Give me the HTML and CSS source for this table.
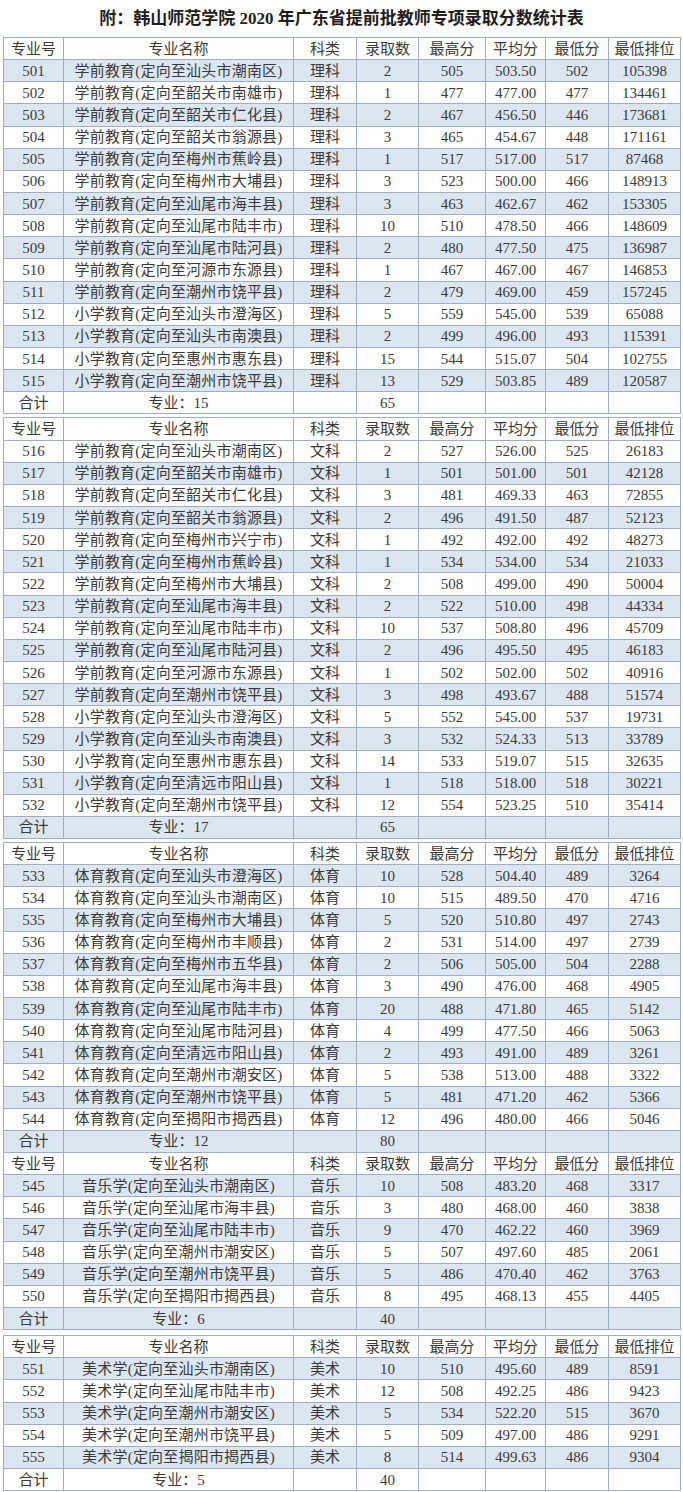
FILE: index.html
```html
<!DOCTYPE html>
<html lang="zh-CN">
<head>
<meta charset="utf-8">
<title>韩山师范学院2020年广东省提前批教师专项录取分数统计表</title>
<link rel="stylesheet" href="styles.css">
</head>
<body>
<h1 class="title">附：韩山师范学院 <span class="num">2020</span> 年广东省提前批教师专项录取分数统计表</h1>

<table class="score">
<colgroup><col class="c1"><col class="c2"><col class="c3"><col class="c4"><col class="c5"><col class="c6"><col class="c7"><col class="c8"></colgroup>
<tr class="head"><td>专业号</td><td>专业名称</td><td>科类</td><td>录取数</td><td>最高分</td><td>平均分</td><td>最低分</td><td>最低排位</td></tr>
<tr class="alt"><td>501</td><td class="name">学前教育(定向至汕头市潮南区)</td><td>理科</td><td>2</td><td>505</td><td>503.50</td><td>502</td><td>105398</td></tr>
<tr><td>502</td><td class="name">学前教育(定向至韶关市南雄市)</td><td>理科</td><td>1</td><td>477</td><td>477.00</td><td>477</td><td>134461</td></tr>
<tr class="alt"><td>503</td><td class="name">学前教育(定向至韶关市仁化县)</td><td>理科</td><td>2</td><td>467</td><td>456.50</td><td>446</td><td>173681</td></tr>
<tr><td>504</td><td class="name">学前教育(定向至韶关市翁源县)</td><td>理科</td><td>3</td><td>465</td><td>454.67</td><td>448</td><td>171161</td></tr>
<tr class="alt"><td>505</td><td class="name">学前教育(定向至梅州市蕉岭县)</td><td>理科</td><td>1</td><td>517</td><td>517.00</td><td>517</td><td>87468</td></tr>
<tr><td>506</td><td class="name">学前教育(定向至梅州市大埔县)</td><td>理科</td><td>3</td><td>523</td><td>500.00</td><td>466</td><td>148913</td></tr>
<tr class="alt"><td>507</td><td class="name">学前教育(定向至汕尾市海丰县)</td><td>理科</td><td>3</td><td>463</td><td>462.67</td><td>462</td><td>153305</td></tr>
<tr><td>508</td><td class="name">学前教育(定向至汕尾市陆丰市)</td><td>理科</td><td>10</td><td>510</td><td>478.50</td><td>466</td><td>148609</td></tr>
<tr class="alt"><td>509</td><td class="name">学前教育(定向至汕尾市陆河县)</td><td>理科</td><td>2</td><td>480</td><td>477.50</td><td>475</td><td>136987</td></tr>
<tr><td>510</td><td class="name">学前教育(定向至河源市东源县)</td><td>理科</td><td>1</td><td>467</td><td>467.00</td><td>467</td><td>146853</td></tr>
<tr class="alt"><td>511</td><td class="name">学前教育(定向至潮州市饶平县)</td><td>理科</td><td>2</td><td>479</td><td>469.00</td><td>459</td><td>157245</td></tr>
<tr><td>512</td><td class="name">小学教育(定向至汕头市澄海区)</td><td>理科</td><td>5</td><td>559</td><td>545.00</td><td>539</td><td>65088</td></tr>
<tr class="alt"><td>513</td><td class="name">小学教育(定向至汕头市南澳县)</td><td>理科</td><td>2</td><td>499</td><td>496.00</td><td>493</td><td>115391</td></tr>
<tr><td>514</td><td class="name">小学教育(定向至惠州市惠东县)</td><td>理科</td><td>15</td><td>544</td><td>515.07</td><td>504</td><td>102755</td></tr>
<tr class="alt"><td>515</td><td class="name">小学教育(定向至潮州市饶平县)</td><td>理科</td><td>13</td><td>529</td><td>503.85</td><td>489</td><td>120587</td></tr>
<tr class="total"><td>合计</td><td>专业：15</td><td></td><td>65</td><td></td><td></td><td></td><td></td></tr>
</table>

<table class="score gap3">
<colgroup><col class="c1"><col class="c2"><col class="c3"><col class="c4"><col class="c5"><col class="c6"><col class="c7"><col class="c8"></colgroup>
<tr class="head"><td>专业号</td><td>专业名称</td><td>科类</td><td>录取数</td><td>最高分</td><td>平均分</td><td>最低分</td><td>最低排位</td></tr>
<tr><td>516</td><td class="name">学前教育(定向至汕头市潮南区)</td><td>文科</td><td>2</td><td>527</td><td>526.00</td><td>525</td><td>26183</td></tr>
<tr class="alt"><td>517</td><td class="name">学前教育(定向至韶关市南雄市)</td><td>文科</td><td>1</td><td>501</td><td>501.00</td><td>501</td><td>42128</td></tr>
<tr><td>518</td><td class="name">学前教育(定向至韶关市仁化县)</td><td>文科</td><td>3</td><td>481</td><td>469.33</td><td>463</td><td>72855</td></tr>
<tr class="alt"><td>519</td><td class="name">学前教育(定向至韶关市翁源县)</td><td>文科</td><td>2</td><td>496</td><td>491.50</td><td>487</td><td>52123</td></tr>
<tr><td>520</td><td class="name">学前教育(定向至梅州市兴宁市)</td><td>文科</td><td>1</td><td>492</td><td>492.00</td><td>492</td><td>48273</td></tr>
<tr class="alt"><td>521</td><td class="name">学前教育(定向至梅州市蕉岭县)</td><td>文科</td><td>1</td><td>534</td><td>534.00</td><td>534</td><td>21033</td></tr>
<tr><td>522</td><td class="name">学前教育(定向至梅州市大埔县)</td><td>文科</td><td>2</td><td>508</td><td>499.00</td><td>490</td><td>50004</td></tr>
<tr class="alt"><td>523</td><td class="name">学前教育(定向至汕尾市海丰县)</td><td>文科</td><td>2</td><td>522</td><td>510.00</td><td>498</td><td>44334</td></tr>
<tr><td>524</td><td class="name">学前教育(定向至汕尾市陆丰市)</td><td>文科</td><td>10</td><td>537</td><td>508.80</td><td>496</td><td>45709</td></tr>
<tr class="alt"><td>525</td><td class="name">学前教育(定向至汕尾市陆河县)</td><td>文科</td><td>2</td><td>496</td><td>495.50</td><td>495</td><td>46183</td></tr>
<tr><td>526</td><td class="name">学前教育(定向至河源市东源县)</td><td>文科</td><td>1</td><td>502</td><td>502.00</td><td>502</td><td>40916</td></tr>
<tr class="alt"><td>527</td><td class="name">学前教育(定向至潮州市饶平县)</td><td>文科</td><td>3</td><td>498</td><td>493.67</td><td>488</td><td>51574</td></tr>
<tr><td>528</td><td class="name">小学教育(定向至汕头市澄海区)</td><td>文科</td><td>5</td><td>552</td><td>545.00</td><td>537</td><td>19731</td></tr>
<tr class="alt"><td>529</td><td class="name">小学教育(定向至汕头市南澳县)</td><td>文科</td><td>3</td><td>532</td><td>524.33</td><td>513</td><td>33789</td></tr>
<tr><td>530</td><td class="name">小学教育(定向至惠州市惠东县)</td><td>文科</td><td>14</td><td>533</td><td>519.07</td><td>515</td><td>32635</td></tr>
<tr class="alt"><td>531</td><td class="name">小学教育(定向至清远市阳山县)</td><td>文科</td><td>1</td><td>518</td><td>518.00</td><td>518</td><td>30221</td></tr>
<tr><td>532</td><td class="name">小学教育(定向至潮州市饶平县)</td><td>文科</td><td>12</td><td>554</td><td>523.25</td><td>510</td><td>35414</td></tr>
<tr class="total alt"><td>合计</td><td>专业：17</td><td></td><td>65</td><td></td><td></td><td></td><td></td></tr>
</table>

<table class="score gap3">
<colgroup><col class="c1"><col class="c2"><col class="c3"><col class="c4"><col class="c5"><col class="c6"><col class="c7"><col class="c8"></colgroup>
<tr class="head"><td>专业号</td><td>专业名称</td><td>科类</td><td>录取数</td><td>最高分</td><td>平均分</td><td>最低分</td><td>最低排位</td></tr>
<tr class="alt"><td>533</td><td class="name">体育教育(定向至汕头市澄海区)</td><td>体育</td><td>10</td><td>528</td><td>504.40</td><td>489</td><td>3264</td></tr>
<tr><td>534</td><td class="name">体育教育(定向至汕头市潮南区)</td><td>体育</td><td>10</td><td>515</td><td>489.50</td><td>470</td><td>4716</td></tr>
<tr class="alt"><td>535</td><td class="name">体育教育(定向至梅州市大埔县)</td><td>体育</td><td>5</td><td>520</td><td>510.80</td><td>497</td><td>2743</td></tr>
<tr><td>536</td><td class="name">体育教育(定向至梅州市丰顺县)</td><td>体育</td><td>2</td><td>531</td><td>514.00</td><td>497</td><td>2739</td></tr>
<tr class="alt"><td>537</td><td class="name">体育教育(定向至梅州市五华县)</td><td>体育</td><td>2</td><td>506</td><td>505.00</td><td>504</td><td>2288</td></tr>
<tr><td>538</td><td class="name">体育教育(定向至汕尾市海丰县)</td><td>体育</td><td>3</td><td>490</td><td>476.00</td><td>468</td><td>4905</td></tr>
<tr class="alt"><td>539</td><td class="name">体育教育(定向至汕尾市陆丰市)</td><td>体育</td><td>20</td><td>488</td><td>471.80</td><td>465</td><td>5142</td></tr>
<tr><td>540</td><td class="name">体育教育(定向至汕尾市陆河县)</td><td>体育</td><td>4</td><td>499</td><td>477.50</td><td>466</td><td>5063</td></tr>
<tr class="alt"><td>541</td><td class="name">体育教育(定向至清远市阳山县)</td><td>体育</td><td>2</td><td>493</td><td>491.00</td><td>489</td><td>3261</td></tr>
<tr><td>542</td><td class="name">体育教育(定向至潮州市潮安区)</td><td>体育</td><td>5</td><td>538</td><td>513.00</td><td>488</td><td>3322</td></tr>
<tr class="alt"><td>543</td><td class="name">体育教育(定向至潮州市饶平县)</td><td>体育</td><td>5</td><td>481</td><td>471.20</td><td>462</td><td>5366</td></tr>
<tr><td>544</td><td class="name">体育教育(定向至揭阳市揭西县)</td><td>体育</td><td>12</td><td>496</td><td>480.00</td><td>466</td><td>5046</td></tr>
<tr class="total alt"><td>合计</td><td>专业：12</td><td></td><td>80</td><td></td><td></td><td></td><td></td></tr>
<tr class="head"><td>专业号</td><td>专业名称</td><td>科类</td><td>录取数</td><td>最高分</td><td>平均分</td><td>最低分</td><td>最低排位</td></tr>
<tr class="alt"><td>545</td><td class="name">音乐学(定向至汕头市潮南区)</td><td>音乐</td><td>10</td><td>508</td><td>483.20</td><td>468</td><td>3317</td></tr>
<tr><td>546</td><td class="name">音乐学(定向至汕尾市海丰县)</td><td>音乐</td><td>3</td><td>480</td><td>468.00</td><td>460</td><td>3838</td></tr>
<tr class="alt"><td>547</td><td class="name">音乐学(定向至汕尾市陆丰市)</td><td>音乐</td><td>9</td><td>470</td><td>462.22</td><td>460</td><td>3969</td></tr>
<tr><td>548</td><td class="name">音乐学(定向至潮州市潮安区)</td><td>音乐</td><td>5</td><td>507</td><td>497.60</td><td>485</td><td>2061</td></tr>
<tr class="alt"><td>549</td><td class="name">音乐学(定向至潮州市饶平县)</td><td>音乐</td><td>5</td><td>486</td><td>470.40</td><td>462</td><td>3763</td></tr>
<tr><td>550</td><td class="name">音乐学(定向至揭阳市揭西县)</td><td>音乐</td><td>8</td><td>495</td><td>468.13</td><td>455</td><td>4405</td></tr>
<tr class="total alt"><td>合计</td><td>专业：6</td><td></td><td>40</td><td></td><td></td><td></td><td></td></tr>
</table>

<table class="score gap5">
<colgroup><col class="c1"><col class="c2"><col class="c3"><col class="c4"><col class="c5"><col class="c6"><col class="c7"><col class="c8"></colgroup>
<tr class="head"><td>专业号</td><td>专业名称</td><td>科类</td><td>录取数</td><td>最高分</td><td>平均分</td><td>最低分</td><td>最低排位</td></tr>
<tr class="alt"><td>551</td><td class="name">美术学(定向至汕头市潮南区)</td><td>美术</td><td>10</td><td>510</td><td>495.60</td><td>489</td><td>8591</td></tr>
<tr><td>552</td><td class="name">美术学(定向至汕尾市陆丰市)</td><td>美术</td><td>12</td><td>508</td><td>492.25</td><td>486</td><td>9423</td></tr>
<tr class="alt"><td>553</td><td class="name">美术学(定向至潮州市潮安区)</td><td>美术</td><td>5</td><td>534</td><td>522.20</td><td>515</td><td>3670</td></tr>
<tr><td>554</td><td class="name">美术学(定向至潮州市饶平县)</td><td>美术</td><td>5</td><td>509</td><td>497.00</td><td>486</td><td>9291</td></tr>
<tr class="alt"><td>555</td><td class="name">美术学(定向至揭阳市揭西县)</td><td>美术</td><td>8</td><td>514</td><td>499.63</td><td>486</td><td>9304</td></tr>
<tr class="total"><td>合计</td><td>专业：5</td><td></td><td>40</td><td></td><td></td><td></td><td></td></tr>
</table>
</body>
</html>
```

FILE: styles.css
```css
html, body {
  margin: 0;
  padding: 0;
  background: #ffffff;
}

body {
  font-family: "Liberation Serif", "Noto Sans CJK SC", serif;
  color: #3a3a3a;
}

.title {
  margin: 0;
  height: 37px;
  line-height: 37px;
  text-align: center;
  font-family: "Liberation Serif", "Noto Sans CJK SC", serif;
  font-size: 17px;
  font-weight: bold;
  color: #1e1e1e;
}

.title .num {
  font-family: "Liberation Serif", serif;
}

.score {
  margin-left: 3px;
  width: 677px;
  table-layout: fixed;
  border-collapse: collapse;
  font-size: 15px;
}

.score.gap3 {
  margin-top: 3px;
}

.score.gap5 {
  margin-top: 5px;
}

.c1 { width: 60px; }
.c2 { width: 230px; }
.c3 { width: 63px; }
.c4 { width: 62px; }
.c5 { width: 67px; }
.c6 { width: 60px; }
.c7 { width: 63px; }
.c8 { width: 72px; }

.score tr {
  height: 22.15px;
  background: #ffffff;
}

.score tr.alt {
  background: #dce6f1;
}

.score td {
  border: 1px solid #9eadc2;
  padding: 0;
  text-align: center;
  vertical-align: middle;
  line-height: 20px;
  white-space: nowrap;
  overflow: hidden;
}

.score td.name {
  letter-spacing: 0.2px;
}
```
